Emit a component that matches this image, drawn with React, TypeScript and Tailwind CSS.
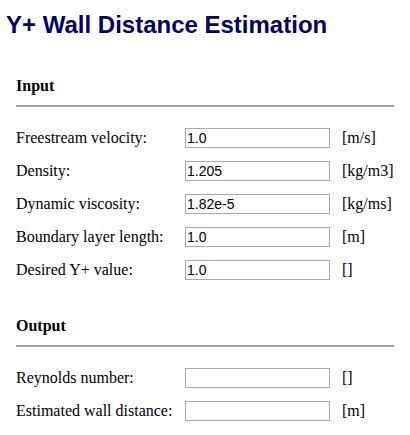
const inputs = [
  { label: 'Freestream velocity:', value: '1.0', unit: '[m/s]' },
  { label: 'Density:', value: '1.205', unit: '[kg/m3]' },
  { label: 'Dynamic viscosity:', value: '1.82e-5', unit: '[kg/ms]' },
  { label: 'Boundary layer length:', value: '1.0', unit: '[m]' },
  { label: 'Desired Y+ value:', value: '1.0', unit: '[]' },
];

const outputs = [
  { label: 'Reynolds number:', value: '', unit: '[]' },
  { label: 'Estimated wall distance:', value: '', unit: '[m]' },
];

type Row = { label: string; value: string; unit: string };

function Field({ label, value, unit }: Row) {
  return (
    <div className="flex items-center h-[20px]">
      <span className="w-[169px] text-[16px] leading-none text-black">{label}</span>
      <input
        readOnly
        defaultValue={value}
        className="w-[145px] h-[20px] border border-[#a9a9a9] px-[1px] text-[14px] text-black outline-none font-['Liberation_Sans',Arial,sans-serif]"
      />
      <span className="ml-[12px] text-[16px] leading-none text-black">{unit}</span>
    </div>
  );
}

function Section({ title, rows }: { title: string; rows: Row[] }) {
  return (
    <section className="px-[16px]">
      <h2 className="text-[16px] font-bold leading-none text-black">{title}</h2>
      <hr className="mt-[11px] border-t-2 border-[#a0a0a0]" />
      <div className="mt-[21px] flex flex-col gap-[13px]">
        {rows.map((r) => (
          <Field key={r.label} {...r} />
        ))}
      </div>
    </section>
  );
}

export default function App() {
  return (
    <div className="w-[410px] h-[435px] bg-white font-['Liberation_Serif','Times_New_Roman',serif]">
      <h1 className="pl-[6px] pt-[13px] text-[24px] font-bold leading-none text-[#000066] font-['Liberation_Sans',Arial,sans-serif]">
        Y+ Wall Distance Estimation
      </h1>
      <div className="mt-[41px]">
        <Section title="Input" rows={inputs} />
      </div>
      <div className="mt-[38px]">
        <Section title="Output" rows={outputs} />
      </div>
    </div>
  );
}
